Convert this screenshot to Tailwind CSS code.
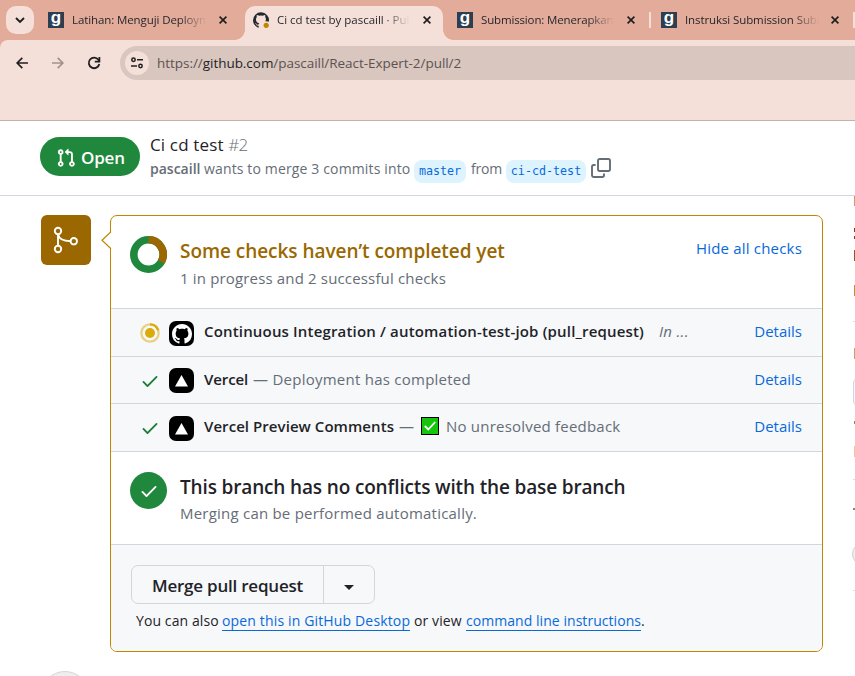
<!DOCTYPE html>
<html lang="en">
<head>
<meta charset="utf-8">
<title>Ci cd test by pascaill · Pull Request #2</title>
<script src="https://cdn.jsdelivr.net/npm/@tailwindcss/browser@4"></script>
</head>
<body class="w-[855px] h-[676px] overflow-hidden bg-white font-['Open_Sans','Noto_Sans',sans-serif] text-[#1f2328] flex flex-col">

<!-- Tab strip -->
<div class="h-[40px] shrink-0 bg-[#e3ab9a] flex items-start pl-[6px] overflow-hidden">
  <div class="mt-[6px] size-[28px] shrink-0 rounded-[10px] bg-[#f5e0d9] flex items-center justify-center">
    <svg width="10" height="8" viewBox="0 0 10 8" fill="none" stroke="#1f1f1f" stroke-width="1.9"><path d="M1 2l4 4 4-4"/></svg>
  </div>
  <div class="w-[211px] shrink-0 h-[40px] pl-[14px] flex items-center">
    <div class="size-[16px] shrink-0 bg-[#2d3e50] text-white text-[17px] leading-[11px] font-bold text-center font-['Liberation_Sans',sans-serif]">g</div>
    <div class="ml-[8px] w-[134px] overflow-hidden whitespace-nowrap text-[11.5px] tracking-[-0.1px] leading-[20px] [mask-image:linear-gradient(to_right,#000_80%,transparent)]">Latihan: Menguji Deploym</div>
    <svg class="ml-[13px]" width="8" height="8" viewBox="0 0 8 8" stroke="#1f1f1f" stroke-width="1.7"><path d="M.6.6l6.8 6.8M7.4.6L.6 7.4"/></svg>
  </div>
  <div class="relative w-[198px] shrink-0 h-[34px] mt-[6px] rounded-t-[10px] bg-[#f5e0d9] pl-[8px] flex items-center">
    <div class="absolute left-[-10px] bottom-0 size-[10px] bg-[radial-gradient(circle_at_0_0,transparent_9.5px,#f5e0d9_10px)]"></div>
    <div class="absolute right-[-10px] bottom-0 size-[10px] bg-[radial-gradient(circle_at_100%_0,transparent_9.5px,#f5e0d9_10px)]"></div>
    <svg class="mt-[-6px]" width="17" height="17" viewBox="0 0 17 17"><path fill="#24292f" d="M8 .3A7.900 7.900 0 0 1 15.800 9.800Q14.300 8.800 12.300 9.500C13.300 7.700 13 6 12.200 5.100c.2-.7.2-1.500-.1-2.200-.8 0-1.500.4-2.200.9a8 8 0 0 0-3.800 0c-.7-.5-1.400-.9-2.200-.9-.3.7-.3 1.500-.1 2.200-1.600 2-.9 5.700 2.400 6.200-.5.400-.6.900-.6 1.300-1.300.3-1.900-.3-2.400-1.200-.4-.6-1.100-.5-.9-.2.9.6.9 2.100 2 2.400.5.200 1 .2 1.400.1v2C2.500 14.800 0 11.800 0 8.300A8 8 0 0 1 8 .3Z"/><circle cx="13.200" cy="13.300" r="2.600" fill="#bf8700"/></svg>
    <div class="mt-[-6px] ml-[7px] w-[133px] overflow-hidden whitespace-nowrap text-[11.5px] tracking-[-0.02px] leading-[20px] [mask-image:linear-gradient(to_right,#000_80%,transparent)]">Ci cd test by pascaill · Pull</div>
    <svg class="mt-[-6px] ml-[13px]" width="8" height="8" viewBox="0 0 8 8" stroke="#1f1f1f" stroke-width="1.700"><path d="M.6.6l6.800 6.800M7.400.6L.6 7.400"/></svg>
  </div>
  <div class="w-[207px] shrink-0 h-[40px] pl-[14px] flex items-center">
    <div class="size-[16px] shrink-0 bg-[#2d3e50] text-white text-[17px] leading-[11px] font-bold text-center font-['Liberation_Sans',sans-serif]">g</div>
    <div class="ml-[8px] w-[133px] shrink-0 overflow-hidden whitespace-nowrap text-[11.5px] tracking-[-0.15px] leading-[20px] [mask-image:linear-gradient(to_right,#000_80%,transparent)]">Submission: Menerapkan</div>
    <svg class="ml-[13px] shrink-0" width="8" height="8" viewBox="0 0 8 8" stroke="#1f1f1f" stroke-width="1.7"><path d="M.6.6l6.8 6.8M7.4.6L.6 7.4"/></svg>
  </div>
  <div class="w-[205px] shrink-0 h-[40px] flex items-center">
    <div class="w-[2px] ml-[-1px] shrink-0 h-[16px] bg-[#f5e0d9]"></div>
    <div class="ml-[10px] size-[16px] shrink-0 bg-[#2d3e50] text-white text-[17px] leading-[11px] font-bold text-center font-['Liberation_Sans',sans-serif]">g</div>
    <div class="ml-[8px] w-[134px] shrink-0 overflow-hidden whitespace-nowrap text-[11.5px] tracking-[-0.1px] leading-[20px] [mask-image:linear-gradient(to_right,#000_80%,transparent)]">Instruksi Submission Subm</div>
    <svg class="ml-[12px] shrink-0" width="8" height="8" viewBox="0 0 8 8" stroke="#1f1f1f" stroke-width="1.7"><path d="M.6.6l6.8 6.8M7.4.6L.6 7.4"/></svg>
    <div class="ml-[14px] w-[2px] shrink-0 h-[16px] bg-[#f5e0d9]"></div>
  </div>
</div>

<!-- Toolbar -->
<div class="h-[81px] shrink-0 bg-[#e3ab9a]">
  <div class="h-full rounded-tl-[8px] bg-[#f5e0d9] border-b border-[#c3b1ab] pt-[6px]">
    <div class="h-[34px] flex items-center pl-[16px]">
      <svg width="12" height="12" viewBox="0 0 12 12" fill="none" stroke="#1f1f1f" stroke-width="1.700"><path d="M12 6H1.300M6.300.8L1.100 6l5.200 5.200"/></svg>
      <svg class="ml-[24px]" width="12" height="12" viewBox="0 0 12 12" fill="none" stroke="#a0928d" stroke-width="1.700"><path d="M0 6h10.700M5.700.8L10.900 6l-5.200 5.200"/></svg>
      <svg class="ml-[23px]" width="14" height="14" viewBox="0 0 14 14" fill="none" stroke="#1f1f1f" stroke-width="1.800"><path d="M12.300 8A5.300 5.300 0 1 1 11.400 3.800L12.300 5"/><path d="M12.400 1v4.600H7.800"/></svg>
      <div class="ml-[19px] flex-1 h-[34px] rounded-l-full bg-[#d8c6bf] flex items-center pl-[5px]">
        <div class="size-[24px] rounded-full bg-[#f5e0d9] flex items-center justify-center">
          <svg width="12" height="12" viewBox="0 0 12 12" fill="none" stroke="#1f1f1f" stroke-width="1.500"><circle cx="2.500" cy="2.800" r="1.700"/><path d="M6 2.800h6M0 9h6"/><circle cx="9.500" cy="9" r="1.700"/></svg>
        </div>
        <div class="ml-[8px] text-[13.5px] tracking-[-0.04px] leading-[20px] text-[#5c5350]">https://<span class="text-[#1f1f1f]">github.com</span>/pascaill/React-Expert-2/pull/2</div>
      </div>
    </div>
  </div>
</div>

<!-- Sticky pull request header -->
<div class="h-[75px] shrink-0 border-b border-[#d0d7de] flex pl-[40px]">
  <div class="mt-[16px] w-[100px] h-[39px] rounded-full bg-[#1f883d] text-white flex items-center pl-[16px]">
    <svg class="mt-[2px]" width="20" height="20" viewBox="0 0 16 16" fill="#fff"><path d="M1.500 3.250a2.250 2.250 0 1 1 3 2.122v5.256a2.251 2.251 0 1 1-1.500 0V5.372A2.250 2.250 0 0 1 1.500 3.250Zm5.677-.177L9.573.677A.25.25 0 0 1 10 .854V2.500h1A2.500 2.500 0 0 1 13.500 5v5.628a2.251 2.251 0 1 1-1.500 0V5a1 1 0 0 0-1-1h-1v1.646a.25.25 0 0 1-.427.177L7.177 3.427a.25.25 0 0 1 0-.354ZM3.750 2.500a.75.75 0 1 0 0 1.500.75.75 0 0 0 0-1.500Zm0 9.500a.75.75 0 1 0 0 1.500.75.75 0 0 0 0-1.500Zm8.250.75a.75.75 0 1 0 1.500 0 .75.75 0 0 0-1.500 0Z"/></svg>
    <span class="ml-[5px] mt-[3px] text-[17px] leading-[24px] font-semibold tracking-[-0.2px]">Open</span>
  </div>
  <div class="ml-[10px] pt-[12px]">
    <div class="h-[24px] leading-[24px] text-[17px] font-medium tracking-[0.15px]">Ci cd test <span class="font-light text-[#656d76] tracking-[-0.7px]">#2</span></div>
    <div class="h-[24px] flex items-center text-[14px] leading-[24px] text-[#656d76] whitespace-nowrap">
      <span class="w-[54px] font-semibold">pascaill</span>
      <span class="w-[210px] tracking-[0.14px]">wants to merge 3 commits into</span>
      <span class="mt-[4px] w-[52px] h-[23px] rounded-[8px] bg-[#ddf4ff] text-[#0969da] text-[11.7px] leading-[22px] text-center font-['DejaVu_Sans_Mono','Liberation_Mono',monospace]">master</span>
      <span class="ml-[5px] w-[35px] tracking-[-0.2px]">from</span>
      <span class="mt-[4px] w-[80px] h-[23px] rounded-[8px] bg-[#ddf4ff] text-[#0969da] text-[11.7px] leading-[22px] text-center font-['DejaVu_Sans_Mono','Liberation_Mono',monospace]">ci-cd-test</span>
      <svg class="ml-[5px] mt-[-2px]" width="20" height="20" viewBox="0 0 20 20" fill="none" stroke="#656d76" stroke-width="1.900"><rect x="7" y="1" width="12" height="12" rx="1.700"/><path d="M4.600 7H2.700A1.700 1.700 0 0 0 1 8.700v8.600A1.700 1.700 0 0 0 2.700 19h8.600a1.700 1.700 0 0 0 1.700-1.700v-1.900"/></svg>
    </div>
  </div>
</div>

<!-- Timeline and sidebar -->
<div class="h-[480px] shrink-0 flex overflow-hidden">
  <div class="w-[110px] shrink-0 pl-[41px] flex flex-col">
    <div class="mt-[19px] size-[50px] shrink-0 rounded-[6px] bg-[#9a6700] flex items-center justify-center">
      <svg width="26" height="28" viewBox="0 0 26 28" fill="none" stroke="#fff" stroke-width="1.900"><circle cx="5" cy="5" r="3.200"/><circle cx="5" cy="23" r="3.200"/><circle cx="20.800" cy="15.200" r="3.200"/><path d="M5 8.200v11.600M5 8.200c.8 4.600 5 7 12.600 7"/></svg>
    </div>
    <div class="mt-[406px] ml-[-1px] size-[50px] shrink-0 rounded-full bg-[#eeeeee] border border-[#d4d6d9]"></div>
  </div>

  <div class="relative mt-[19px] w-[713px] h-[437px] shrink-0 rounded-[7px] border border-[#bf8700] flex flex-col">
    <svg class="absolute left-[-10px] top-[15px]" width="11" height="18" viewBox="0 0 11 18"><path d="M11 .5L9.500 1.500 1 9.500l8.500 8h1.500z" fill="#fff"/><path d="M9.500.5v.8L1 9.300l8.500 8v.7" fill="none" stroke="#bf8700" stroke-width="1.200"/></svg>
    <div class="h-[92px] shrink-0 flex pl-[19px] pr-[20px]">
      <svg class="mt-[20px] shrink-0" width="37" height="37" viewBox="0 0 37 37" fill="none" stroke-width="7.600"><circle cx="18.500" cy="18.500" r="14.700" stroke="#1f883d"/><path d="M18.500 3.800A14.700 14.700 0 0 1 31.230 25.850" stroke="#9a6700"/></svg>
      <div class="ml-[13px] flex-1 pt-[21px]">
        <div class="h-[28px] leading-[28px] text-[19px] font-semibold tracking-[-0.05px] text-[#9a6700]">Some checks haven’t completed yet</div>
        <div class="mt-[1px] h-[24px] leading-[24px] text-[15px] tracking-[0.16px] text-[#656d76]">1 in progress and 2 successful checks</div>
      </div>
      <div class="mt-[20px] h-[24px] leading-[24px] text-[15px] tracking-[0.19px] text-[#0969da]">Hide all checks</div>
    </div>

    <div class="h-[48px] shrink-0 border-t border-[#d0d7de] bg-[#f6f8fa] flex items-center pl-[29px] pr-[20px] text-[15px] leading-[24px]">
      <svg class="mt-[1px]" width="20" height="20" viewBox="0 0 20 20" fill="none"><circle cx="10" cy="10" r="8.700" stroke="#dbab0a" stroke-opacity=".5" stroke-width="2.300"/><path d="M10 1.300A8.700 8.700 0 0 1 18.300 7.400" stroke="#dbab0a" stroke-width="2.300"/><circle cx="10" cy="10" r="5" fill="#dbab0a"/></svg>
      <span class="ml-[9px] mt-[2px] size-[25px] rounded-[7px] bg-black flex items-center justify-center"><svg width="20" height="20" viewBox="0 0 16 16" fill="#fff"><path d="M8 0c4.420 0 8 3.580 8 8a8.013 8.013 0 0 1-5.450 7.590c-.4.08-.55-.17-.55-.38 0-.27.01-1.130.01-2.200 0-.75-.25-1.230-.54-1.480 1.780-.2 3.650-.88 3.650-3.950 0-.88-.31-1.590-.82-2.150.08-.2.36-1.020-.08-2.120 0 0-.67-.22-2.200.82-.64-.18-1.320-.27-2-.27-.68 0-1.360.09-2 .27-1.530-1.030-2.200-.82-2.200-.82-.44 1.100-.16 1.920-.08 2.120-.51.56-.82 1.280-.82 2.150 0 3.060 1.860 3.750 3.640 3.950-.23.2-.44.55-.51 1.070-.46.21-1.610.55-2.330-.66-.15-.24-.6-.83-1.230-.82-.67.01-.27.38.01.53.34.19.73.9.82 1.130.16.45.68 1.310 2.690.94 0 .67.01 1.300.01 1.490 0 .21-.15.45-.55.38A7.995 7.995 0 0 1 0 8c0-4.420 3.580-8 8-8Z"/></svg></span>
      <span class="ml-[10px] mt-[-4px] w-[455px] font-semibold tracking-[0.17px] whitespace-nowrap">Continuous Integration / automation-test-job (pull_request)</span>
      <span class="mt-[-4px] italic tracking-[0.3px] text-[#656d76]">In ...</span>
      <span class="mt-[-4px] ml-auto text-[#0969da]">Details</span>
    </div>
    <div class="h-[47px] shrink-0 border-t border-[#d0d7de] bg-[#f6f8fa] flex items-center pl-[29px] pr-[20px] text-[15px] leading-[24px]">
      <svg class="mt-[1px]" width="20" height="20" viewBox="0 0 16 16" fill="#1a7f37"><path d="M13.780 4.220a.75.75 0 0 1 0 1.060l-7.250 7.250a.75.75 0 0 1-1.060 0L2.220 9.280a.751.751 0 0 1 .018-1.042.751.751 0 0 1 1.042-.018L6 10.940l6.720-6.720a.75.75 0 0 1 1.060 0Z"/></svg>
      <span class="ml-[9px] mt-[1px] size-[25px] rounded-[7px] bg-black flex items-center justify-center"><svg width="13" height="12" viewBox="0 0 13 12"><path d="M6.500 0L13 11.500H0z" fill="#fff"/></svg></span>
      <span class="ml-[10px] mt-[-3px] w-[49px] font-semibold tracking-[-0.1px]">Vercel</span>
      <span class="mt-[-3px] tracking-[0.25px] text-[#656d76]">— Deployment has completed</span>
      <span class="mt-[-3px] ml-auto text-[#0969da]">Details</span>
    </div>
    <div class="h-[48px] shrink-0 border-t border-[#d0d7de] bg-[#f6f8fa] flex items-center pl-[29px] pr-[20px] text-[15px] leading-[24px]">
      <svg class="mt-[1px]" width="20" height="20" viewBox="0 0 16 16" fill="#1a7f37"><path d="M13.780 4.220a.75.75 0 0 1 0 1.060l-7.250 7.250a.75.75 0 0 1-1.060 0L2.220 9.280a.751.751 0 0 1 .018-1.042.751.751 0 0 1 1.042-.018L6 10.940l6.720-6.720a.75.75 0 0 1 1.060 0Z"/></svg>
      <span class="ml-[9px] mt-[2px] size-[25px] rounded-[7px] bg-black flex items-center justify-center"><svg width="13" height="12" viewBox="0 0 13 12"><path d="M6.500 0L13 11.500H0z" fill="#fff"/></svg></span>
      <span class="ml-[10px] mt-[-4px] w-[195px] font-semibold tracking-[0.06px]">Vercel Preview Comments</span>
      <span class="mt-[-4px] w-[22px] text-[#656d76]">—</span>
      <span class="mt-[-3px] size-[18px] bg-[#16c60c] border border-black flex items-center justify-center"><svg width="12" height="10" viewBox="0 0 12 10" fill="none" stroke="#fff" stroke-width="1.800"><path d="M.8 5l3.500 3.500L11.200 1"/></svg></span>
      <span class="ml-[7px] mt-[-4px] tracking-[0.21px] text-[#656d76]">No unresolved feedback</span>
      <span class="mt-[-4px] ml-auto text-[#0969da]">Details</span>
    </div>

    <div class="h-[93px] shrink-0 border-t border-[#d0d7de] flex pl-[19px]">
      <div class="mt-[20px] size-[37px] shrink-0 rounded-full bg-[#1f883d] flex items-center justify-center">
        <svg class="mt-[1px]" width="20" height="20" viewBox="0 0 16 16" fill="#fff"><path d="M13.780 4.220a.75.75 0 0 1 0 1.060l-7.250 7.250a.75.75 0 0 1-1.060 0L2.220 9.280a.751.751 0 0 1 .018-1.042.751.751 0 0 1 1.042-.018L6 10.940l6.720-6.720a.75.75 0 0 1 1.060 0Z"/></svg>
      </div>
      <div class="ml-[13px] pt-[21px]">
        <div class="h-[28px] leading-[28px] text-[19px] font-semibold tracking-[-0.15px]">This branch has no conflicts with the base branch</div>
        <div class="h-[24px] leading-[24px] text-[15px] tracking-[0.22px] text-[#656d76]">Merging can be performed automatically.</div>
      </div>
    </div>

    <div class="flex-1 border-t border-[#d0d7de] bg-[#f6f8fa] rounded-b-[6px] pt-[20px] pl-[20px]">
      <div class="w-[244px] h-[39px] rounded-[7px] border border-[#d0d7de] flex">
        <div class="w-[192px] border-r border-[#d0d7de] text-center text-[17px] leading-[39px] font-semibold tracking-[-0.22px]">Merge pull request</div>
        <div class="flex-1 flex items-center justify-center"><svg class="mt-[5px]" width="10" height="5" viewBox="0 0 10 5"><path d="M0 0h10L5 5z" fill="#1f2328"/></svg></div>
      </div>
      <div class="mt-[5px] ml-[5px] flex text-[14px] leading-[24px] tracking-[0.1px] whitespace-nowrap">
        <span class="w-[86px]">You can also</span>
        <span class="w-[188px] h-[22px] border-b border-[#0969da] text-[#0969da] tracking-[0.15px]">open this in GitHub Desktop</span>
        <span class="ml-[4px] w-[52px]">or view</span>
        <span class="w-[175px] h-[22px] border-b border-[#0969da] text-[#0969da] tracking-[0.05px]">command line instructions</span>
        <span>.</span>
      </div>
    </div>
  </div>

  <!-- Sidebar edge -->
  <div class="ml-auto w-[3px] overflow-hidden flex flex-col items-end">
    <div class="w-px h-[10px] bg-[#cc9a68]"></div>
    <div class="mt-[22px] w-px h-[4px] bg-[#8a3a10]"></div>
    <div class="mt-[4px] w-px h-[3px] bg-[#8a3a10]"></div>
    <div class="mt-[11px] w-px h-[11px] bg-[#a4501c]"></div>
    <div class="mt-[24px] w-px h-[11px] bg-[#c98a2e]"></div>
    <div class="mt-[25px] w-[2px] h-px bg-[#d8dee4]"></div>
    <div class="mt-[26px] w-px h-[11px] bg-[#cc9a68]"></div>
    <div class="mt-[18px] mr-[-28px] w-[30px] shrink-0 h-[30px] rounded-[6px] border border-[#d0d7de] bg-[#f6f8fa]"></div>
    <div class="mt-[14px] w-px h-[3px] bg-[#9b7a70]"></div>
    <div class="mt-[22px] w-px h-[11px] bg-[#f6c58f]"></div>
    <div class="mt-[22px] w-[2px] h-px bg-[#d8dee4]"></div>
    <div class="mt-[28px] w-[2px] h-[2px] bg-[#9b7a70]"></div>
    <div class="mt-[32px] mr-[-21px] size-[24px] shrink-0 rounded-full border border-[#cfcfcf] bg-[#eeeeee]"></div>
    <div class="mt-[24px] w-[2px] h-px bg-[#d8dee4]"></div>
  </div>
</div>
</body>
</html>
